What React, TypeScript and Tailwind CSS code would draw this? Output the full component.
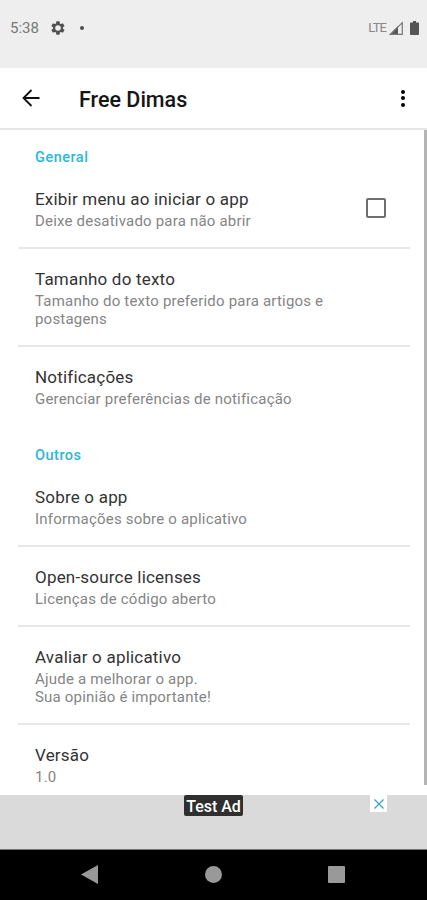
import React from 'react';

interface SettingItem {
  title: string;
  summary: string[];
  checkbox?: boolean;
  divider?: boolean;
}

const generalItems: SettingItem[] = [
  {
    title: 'Exibir menu ao iniciar o app',
    summary: ['Deixe desativado para não abrir'],
    checkbox: true,
    divider: true
  },
  {
    title: 'Tamanho do texto',
    summary: ['Tamanho do texto preferido para artigos e', 'postagens'],
    divider: true
  },
  { title: 'Notificações', summary: ['Gerenciar preferências de notificação'] }
];

const otherItems: SettingItem[] = [
  { title: 'Sobre o app', summary: ['Informações sobre o aplicativo'], divider: true },
  { title: 'Open-source licenses', summary: ['Licenças de código aberto'], divider: true },
  {
    title: 'Avaliar o aplicativo',
    summary: ['Ajude a melhorar o app.', 'Sua opinião é importante!'],
    divider: true
  },
  { title: 'Versão', summary: ['1.0'] }
];

const StatusBar: React.FC = () => (
  <div className="flex h-[68px] shrink-0 items-start justify-between bg-[#eeeeee] pl-[10px] pr-[8px] pt-[18px]">
    <div className="flex h-[19px] items-center">
      <span className="w-[40px] text-[15px] leading-[18px] text-[#777777]">5:38</span>
      <svg className="size-[16px]" viewBox="0 0 24 24" fill="#505050">
        <path
          fillRule="evenodd"
          d="M19.4 13a7.8 7.8 0 0 0 0-2l2.1-1.6a.5.5 0 0 0 .1-.7l-2-3.4a.5.5 0 0 0-.6-.2l-2.5 1a7.3 7.3 0 0 0-1.7-1l-.4-2.6a.5.5 0 0 0-.5-.5h-4a.5.5 0 0 0-.5.5L9 5.1a7.3 7.3 0 0 0-1.7 1l-2.5-1a.5.5 0 0 0-.6.2l-2 3.4a.5.5 0 0 0 .1.7L4.500 11a7.800 7.800 0 0 0 0 2l-2.200 1.600a.5.5 0 0 0-.1.7l2 3.400a.5.5 0 0 0 .6.2l2.500-1a7.300 7.300 0 0 0 1.700 1l.4 2.600c0 .3.2.5.5.5h4c.3 0 .5-.2.5-.5l.4-2.600a7.300 7.300 0 0 0 1.700-1l2.500 1c.2.1.5 0 .6-.2l2-3.400a.5.5 0 0 0-.1-.7zM12 16.200a4.200 4.200 0 1 1 0-8.400 4.200 4.200 0 0 1 0 8.400z"
        />
      </svg>
      <span className="ml-[14px] size-[4px] rounded-full bg-[#4f4f4f]" />
    </div>
    <div className="flex h-[19px] items-center">
      <span className="text-[13px] leading-[18px] tracking-[-0.9px] text-[#888888]">LTE</span>
      <svg className="ml-[3px] h-[14px] w-[14px]" viewBox="0 0 14 14">
        <path d="M0 14 9 5v9z" fill="#555555" />
        <path d="M1.500 13.400 13.300 1.600v11.800z" fill="none" stroke="#777777" strokeWidth="1.200" />
      </svg>
      <svg className="ml-[7px] h-[14px] w-[9px]" viewBox="0 0 9 15" preserveAspectRatio="none" fill="#555555">
        <path d="M3 0h3v1.600h2.200c.5 0 .8.3.8.8v11.800c0 .5-.3.8-.8.8H.8c-.5 0-.8-.3-.8-.8V2.400c0-.5.3-.8.8-.8H3z" />
      </svg>
    </div>
  </div>
);

const Header: React.FC = () => (
  <header className="flex h-[62px] shrink-0 items-center justify-between border-b-2 border-[#e6e6e6] bg-white px-[22px]">
    <div className="flex items-center">
      <svg className="size-[18px]" viewBox="0 0 18 18" fill="none" stroke="#111111" strokeWidth="1.800">
        <path d="M17.500 9H2M9.500 1l-8 8 8 8" />
      </svg>
      <h1 className="ml-[39px] mt-[3px] text-[21.500px] font-medium leading-6 text-[#161616]">Free Dimas</h1>
    </div>
    <div className="flex flex-col gap-[2.500px]">
      <span className="size-[4px] rounded-full bg-black" />
      <span className="size-[4px] rounded-full bg-black" />
      <span className="size-[4px] rounded-full bg-black" />
    </div>
  </header>
);

const Category: React.FC<{ label: string }> = ({ label }) => (
  <h2 className="pl-[17px] text-[14.500px] font-medium leading-[18px] tracking-[0.5px] text-[#2ab8d6]">{label}</h2>
);

const Item: React.FC<{ item: SettingItem }> = ({ item }) => (
  <div>
    <div className="flex items-center justify-between pb-[16.500px] pl-[17px] pr-[24px] pt-[19px]">
      <div>
        <div className="text-[17px] leading-[22px] tracking-[0.2px] text-[#333333]">{item.title}</div>
        <div className="mt-[2px] text-[15px] leading-[18.500px] tracking-[0.2px] text-[#858585]">
          {item.summary.map((line) => (
            <div key={line} className="whitespace-nowrap">
              {line}
            </div>
          ))}
        </div>
      </div>
      {item.checkbox && (
        <span className="mt-[-2px] size-[20px] rounded-[2px] border-2 border-[#6f6f6f]" />
      )}
    </div>
    {item.divider && <div className="h-[2px] bg-[#e8e8e8]" />}
  </div>
);

const App: React.FC = () => {
  return (
    <div className="flex h-[900px] w-[427px] flex-col overflow-hidden bg-white font-['Roboto',sans-serif]">
      <StatusBar />
      <Header />
      <main className="flex min-h-0 flex-1 justify-between overflow-hidden">
        <div className="ml-[18px] w-[392px] pt-[19px]">
          <Category label="General" />
          <div className="h-[1.500px]" />
          {generalItems.map((item) => (
            <Item key={item.title} item={item} />
          ))}
          <div className="h-[22px]" />
          <Category label="Outros" />
          <div className="h-[1.500px]" />
          {otherItems.map((item) => (
            <Item key={item.title} item={item} />
          ))}
        </div>
        <div className="h-[655px] w-[3.500px] bg-[#b4b4b4]" />
      </main>
      <div className="relative flex h-[55px] shrink-0 justify-center border-b border-[#777777] bg-[#dadada]">
        <span className="h-[21px] w-[59px] rounded-[2px] bg-[#2f2f2f] text-center text-[16px] font-medium leading-[23px] text-white">
          Test Ad
        </span>
        <span className="absolute left-[370px] top-0 flex size-[17px] items-center justify-center bg-white">
          <svg className="size-[10px]" viewBox="0 0 11 11" stroke="#3fa9cc" strokeWidth="1.500">
            <path d="M.5.5l10 10M10.500.5l-10 10" />
          </svg>
        </span>
      </div>
      <nav className="flex h-[50px] shrink-0 items-center bg-black pb-[2px] pl-[81px]">
        <svg className="h-[19px] w-[17px]" viewBox="0 0 17 19" fill="#999999">
          <path d="M0 9.500 17 0v19z" />
        </svg>
        <span className="ml-[107px] size-[17px] rounded-full bg-[#999999]" />
        <span className="ml-[106px] size-[17px] rounded-[1px] bg-[#999999]" />
      </nav>
    </div>
  );
};

export default App;
